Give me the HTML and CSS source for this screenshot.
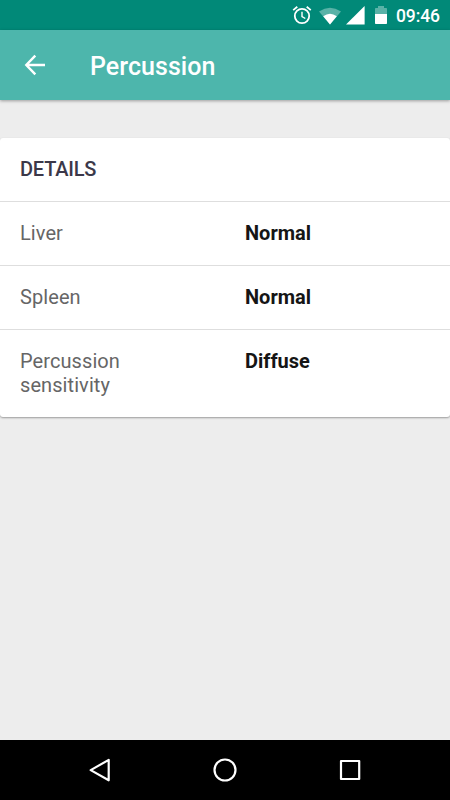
FILE: index.html
```html
<!DOCTYPE html>
<html lang="en">
<head>
<meta charset="utf-8">
<title>Percussion</title>
<link rel="stylesheet" href="styles.css">
</head>
<body>
<div class="status">
  <svg class="alarm" width="20" height="20" viewBox="0 0 20 20" fill="none" stroke="#fff"><circle cx="10" cy="11" r="7.2" stroke-width="1.8"/><path d="M10 6.8v4.7l3.3 2" stroke-width="1.4"/><path d="M1.2 5.1L5.3 1.7M18.800 5.100l-4.100-3.400" stroke-width="1.8"/></svg>
  <svg class="wifi" width="22" height="18" viewBox="0 0 22 18" fill="#fff"><path opacity=".35" d="M0 4.500Q11-2.800 22 4.500L11 17.600z"/><path d="M4.200 9.300Q11 4 17.800 9.300L11 17.600z"/></svg>
  <svg class="signal" width="19" height="19" viewBox="0 0 19 19" fill="#fff"><path d="M0 18.400L18.600 0v18.400z"/></svg>
  <svg class="battery" width="12" height="18" viewBox="0 0 12 18" fill="#fff"><path opacity=".35" d="M3 0h6v2h2.200q.8 0 .8.8V8H0V2.800Q0 2 .8 2H3z"/><path d="M0 8h12v9.200q0 .8-.8.8H.8q-.8 0-.8-.8z"/></svg>
  <span class="time">09:46</span>
</div>
<header class="appbar">
  <svg width="22" height="22" viewBox="0 0 22 22" fill="none" stroke="#fff" stroke-width="2.4"><path d="M21 11H2.500M11.300 1.700L2.300 11l9 9.300"/></svg>
  <h1>Percussion</h1>
</header>
<main>
  <section class="card">
    <h2>DETAILS</h2>
    <dl>
      <div class="row"><dt>Liver</dt><dd>Normal</dd></div>
      <div class="row"><dt>Spleen</dt><dd>Normal</dd></div>
      <div class="row"><dt>Percussion sensitivity</dt><dd>Diffuse</dd></div>
    </dl>
  </section>
</main>
<nav class="navbar">
  <svg width="24" height="24" viewBox="0 0 24 24" fill="none" stroke="#fff" stroke-width="2.200" stroke-linejoin="round"><path d="M20.700 1.900v20.400L2.700 12.100z"/></svg>
  <svg width="24" height="24" viewBox="0 0 24 24" fill="none" stroke="#fff" stroke-width="2.200"><circle cx="12" cy="12" r="10.500"/></svg>
  <svg width="24" height="24" viewBox="0 0 24 24" fill="none" stroke="#fff" stroke-width="2.200" stroke-linejoin="round"><path d="M3 3h18.200v18H3z"/></svg>
</nav>
</body>
</html>
```

FILE: styles.css
```css
* { box-sizing: border-box; margin: 0; padding: 0; }
body {
  height: 800px;
  display: flex;
  flex-direction: column;
  overflow: hidden;
  background: #ededed;
  font-family: Roboto, sans-serif;
}
svg { display: block; flex: none; }
.status {
  height: 30px;
  display: flex;
  align-items: center;
  justify-content: flex-end;
  padding-right: 10px;
  background: #018978;
  color: #fff;
}
.wifi { margin-left: 7px; margin-top: 1px; }
.signal { margin-left: 5px; }
.battery { margin-left: 10px; }
.time {
  width: 44px;
  margin-left: 9px;
  padding-top: 2px;
  font-size: 17.5px;
  font-weight: 500;
  line-height: 20px;
  letter-spacing: -.1px;
}
.appbar {
  height: 70px;
  display: flex;
  align-items: center;
  gap: 44px;
  padding-left: 24px;
  background: #4db6ac;
  color: #fff;
  box-shadow: 0 1px 3px rgba(0, 0, 0, .35);
}
.appbar h1 { font-size: 25px; font-weight: 500; line-height: 30px; padding-top: 3px; letter-spacing: .05px; }
main { flex: 1; padding-top: 37.5px; }
.card {
  background: #fff;
  border-radius: 3px;
  box-shadow: 0 1px 2px rgba(0, 0, 0, .35);
}
.card h2 {
  padding: 19px 20px 20px;
  font-size: 20px;
  font-weight: 500;
  line-height: 24px;
  letter-spacing: -.2px;
  color: #3b3849;
}
.row {
  display: grid;
  grid-template-columns: 205px 1fr;
  column-gap: 20px;
  padding: 19px 20px 20px;
  border-top: 1px solid #dedede;
  font-size: 20px;
  line-height: 24px;
}
.row dt { max-width: 160px; letter-spacing: .08px; color: #666; }
.row dd { font-weight: 700; color: #151515; }
.navbar {
  height: 60px;
  display: flex;
  align-items: center;
  justify-content: center;
  gap: 101px;
  background: #000;
}
```
